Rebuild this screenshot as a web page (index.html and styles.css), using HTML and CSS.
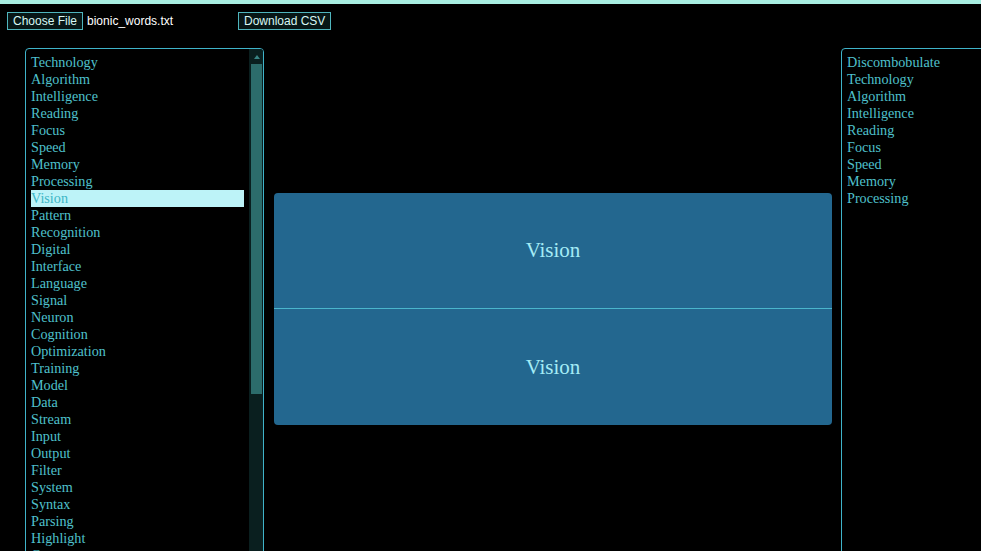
FILE: index.html
```html
<!DOCTYPE html>
<html lang="en">
<head>
<meta charset="utf-8">
<title>Bionic Words</title>
<link rel="stylesheet" href="styles.css">
</head>
<body>
<div class="topband"></div>
<div class="toolbar">
  <div class="file-group">
    <button class="btn">Choose File</button>
    <span class="filename">bionic_words.txt</span>
  </div>
  <button class="btn">Download CSV</button>
</div>
<div class="main">
  <div class="list list-left">
    <div class="list-body">
      <div class="item">Technology</div>
      <div class="item">Algorithm</div>
      <div class="item">Intelligence</div>
      <div class="item">Reading</div>
      <div class="item">Focus</div>
      <div class="item">Speed</div>
      <div class="item">Memory</div>
      <div class="item">Processing</div>
      <div class="item selected">Vision</div>
      <div class="item">Pattern</div>
      <div class="item">Recognition</div>
      <div class="item">Digital</div>
      <div class="item">Interface</div>
      <div class="item">Language</div>
      <div class="item">Signal</div>
      <div class="item">Neuron</div>
      <div class="item">Cognition</div>
      <div class="item">Optimization</div>
      <div class="item">Training</div>
      <div class="item">Model</div>
      <div class="item">Data</div>
      <div class="item">Stream</div>
      <div class="item">Input</div>
      <div class="item">Output</div>
      <div class="item">Filter</div>
      <div class="item">System</div>
      <div class="item">Syntax</div>
      <div class="item">Parsing</div>
      <div class="item">Highlight</div>
      <div class="item">Contrast</div>
    </div>
    <div class="scrollbar">
      <div class="sb-arrow"><span class="sb-tri"></span></div>
      <div class="sb-thumb"></div>
    </div>
  </div>
  <div class="center">
    <div class="card">
      <div class="half half-top">Vision</div>
      <div class="half half-bottom">Vision</div>
    </div>
  </div>
  <div class="list list-right">
    <div class="list-body">
      <div class="item">Discombobulate</div>
      <div class="item">Technology</div>
      <div class="item">Algorithm</div>
      <div class="item">Intelligence</div>
      <div class="item">Reading</div>
      <div class="item">Focus</div>
      <div class="item">Speed</div>
      <div class="item">Memory</div>
      <div class="item">Processing</div>
    </div>
  </div>
</div>
</body>
</html>
```
FILE: styles.css
```css
html, body {
  margin: 0;
  padding: 0;
  background: #000;
  overflow: hidden;
  height: 100%;
}

body {
  font-family: "Liberation Serif", serif;
}

.topband {
  height: 4px;
  background: #a8eee2;
}

.toolbar {
  display: flex;
  align-items: center;
  padding: 8px 7px 0;
  height: 18px;
}

.file-group {
  display: flex;
  align-items: center;
  gap: 4px;
  width: 231px;
}

.btn {
  box-sizing: border-box;
  height: 18px;
  margin: 0;
  padding: 0 5px;
  background: #071616;
  color: #d8f7f4;
  border: 1px solid #4fb5bd;
  border-radius: 0;
  font-family: "Liberation Sans", Arial, sans-serif;
  font-size: 12px;
  line-height: 16px;
}

.filename {
  color: #ffffff;
  font-family: "Liberation Sans", Arial, sans-serif;
  font-size: 12px;
  white-space: nowrap;
}

.main {
  display: flex;
  margin: 18px 0 0 25px;
  height: 522px;
}

.list {
  box-sizing: border-box;
  flex: none;
  display: flex;
  width: 239px;
  height: 522px;
  border: 1px solid #3fb3c9;
  border-radius: 4px;
  overflow: hidden;
  color: #4fc0cc;
  font-size: 14.2px;
  line-height: 17px;
}

.list-body {
  flex: 1;
  min-width: 0;
  padding: 5px;
  overflow: hidden;
}

.item {
  height: 17px;
  white-space: nowrap;
}

.item.selected {
  background: #bdf3f8;
  color: #3cb6c6;
}

.scrollbar {
  flex: none;
  width: 14px;
  background: #0a1f1f;
  display: flex;
  flex-direction: column;
}

.sb-arrow {
  height: 15px;
  display: flex;
  align-items: center;
  justify-content: center;
}

.sb-tri {
  width: 0;
  height: 0;
  margin-left: 1px;
  border-left: 3px solid transparent;
  border-right: 3px solid transparent;
  border-bottom: 4px solid #3a8585;
}

.sb-thumb {
  height: 330px;
  margin: 0 1px 0 2px;
  background: #2c6c6b;
}

.center {
  flex: none;
  width: 558px;
  margin: 0 9px 0 10px;
  display: flex;
  align-items: center;
}

.card {
  width: 100%;
  height: 232px;
  background: #23678f;
  border-radius: 4px;
  display: flex;
  flex-direction: column;
}

.half {
  display: flex;
  align-items: center;
  justify-content: center;
  color: #a4ecf6;
  font-size: 21px;
}

.half-top {
  height: 115px;
}

.half-bottom {
  flex: 1;
  border-top: 1px solid #4ab6cc;
}
```
